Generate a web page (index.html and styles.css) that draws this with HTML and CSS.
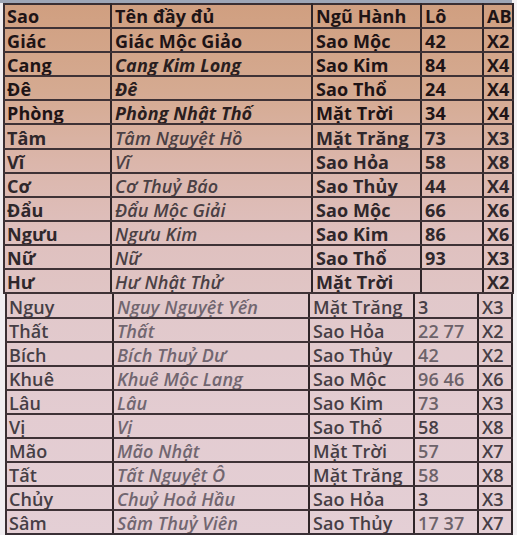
FILE: index.html
```html
<!DOCTYPE html>
<html lang="vi">
<head>
<meta charset="utf-8">
<title>Nhị thập bát tú</title>
<link rel="stylesheet" href="styles.css">
</head>
<body>
<div class="sheet">
  <div class="topband"></div>
  <table class="grid grid-top">
    <colgroup><col class="c1"><col class="c2"><col class="c3"><col class="c4"><col class="c5"></colgroup>
    <tr class="dark head"><td>Sao</td><td>Tên đầy đủ</td><td>Ngũ Hành</td><td>Lô</td><td>AB</td></tr>
    <tr class="dark"><td>Giác</td><td>Giác Mộc Giảo</td><td>Sao Mộc</td><td>42</td><td>X2</td></tr>
    <tr class="dark"><td>Cang</td><td class="it">Cang Kim Long</td><td>Sao Kim</td><td>84</td><td>X4</td></tr>
    <tr class="dark"><td>Đê</td><td class="it">Đê</td><td>Sao Thổ</td><td>24</td><td>X4</td></tr>
    <tr class="dark"><td>Phòng</td><td class="it">Phòng Nhật Thố</td><td>Mặt Trời</td><td>34</td><td>X4</td></tr>
    <tr class="mid"><td>Tâm</td><td class="it">Tâm Nguyệt Hồ</td><td>Mặt Trăng</td><td>73</td><td>X3</td></tr>
    <tr class="mid"><td>Vĩ</td><td class="it">Vĩ</td><td>Sao Hỏa</td><td>58</td><td>X8</td></tr>
    <tr class="mid"><td>Cơ</td><td class="it">Cơ Thuỷ Báo</td><td>Sao Thủy</td><td>44</td><td>X4</td></tr>
    <tr class="mid"><td>Đẩu</td><td class="it">Đẩu Mộc Giải</td><td>Sao Mộc</td><td>66</td><td>X6</td></tr>
    <tr class="mid"><td>Ngưu</td><td class="it">Ngưu Kim</td><td>Sao Kim</td><td>86</td><td>X6</td></tr>
    <tr class="mid"><td>Nữ</td><td class="it">Nữ</td><td>Sao Thổ</td><td>93</td><td>X3</td></tr>
    <tr class="mid"><td>Hư</td><td class="it">Hư Nhật Thử</td><td>Mặt Trời</td><td></td><td>X2</td></tr>
  </table>
  <table class="grid grid-bottom">
    <colgroup><col class="d1"><col class="d2"><col class="d3"><col class="d4"><col class="d5"></colgroup>
    <tr class="light"><td>Nguy</td><td class="it">Nguy Nguyệt Yến</td><td>Mặt Trăng</td><td>3</td><td>X3</td></tr>
    <tr class="light"><td>Thất</td><td class="it">Thất</td><td>Sao Hỏa</td><td class="num">22 77</td><td>X2</td></tr>
    <tr class="light"><td>Bích</td><td class="it">Bích Thuỷ Dư</td><td>Sao Thủy</td><td class="num">42</td><td>X2</td></tr>
    <tr class="light"><td>Khuê</td><td class="it">Khuê Mộc Lang</td><td>Sao Mộc</td><td class="num">96 46</td><td>X6</td></tr>
    <tr class="light"><td>Lâu</td><td class="it">Lâu</td><td>Sao Kim</td><td class="num">73</td><td>X3</td></tr>
    <tr class="light"><td>Vị</td><td class="it">Vị</td><td>Sao Thổ</td><td>58</td><td>X8</td></tr>
    <tr class="light"><td>Mão</td><td class="it">Mão Nhật</td><td>Mặt Trời</td><td class="num">57</td><td>X7</td></tr>
    <tr class="light"><td>Tất</td><td class="it">Tất Nguyệt Ô</td><td>Mặt Trăng</td><td class="num">58</td><td>X8</td></tr>
    <tr class="light"><td>Chủy</td><td class="it">Chuỷ Hoả Hầu</td><td>Sao Hỏa</td><td>3</td><td>X3</td></tr>
    <tr class="light"><td>Sâm</td><td class="it">Sâm Thuỷ Viên</td><td>Sao Thủy</td><td class="num">17 37</td><td>X7</td></tr>
  </table>
</div>
</body>
</html>
```
FILE: styles.css
```css
html, body {
  margin: 0;
  padding: 0;
}
body {
  width: 517px;
  height: 535px;
  overflow: hidden;
  background: #f1eef1;
  font-family: "Open Sans", "Liberation Sans", sans-serif;
}
.sheet {
  width: 517px;
  height: 535px;
  background:
    linear-gradient(to right, transparent 0, transparent 512px, #f3f1f3 512px);
}
.topband {
  height: 3px;
  width: 512px;
  background: #9ea6b6;
}
.grid {
  border-collapse: collapse;
  table-layout: fixed;
  font-size: 18px;
  letter-spacing: 0.1px;
}
.grid td {
  padding: 2px 0 0 3px;
  white-space: nowrap;
  overflow: hidden;
  border-bottom: 2px solid #3e3236;
  border-right: 2px solid #2f2528;
  line-height: 20px;
  vertical-align: middle;
}
.grid td:first-child {
  border-left: 2px solid #3a2f33;
  padding-left: 2px;
}
.grid-top {
  margin-left: 3px;
  width: 509px;
  background: linear-gradient(to bottom, #d09f80 0%, #d5aa91 30%, #dbb6ab 55%, #dfc0be 80%, #e0c5c5 100%);
}
.grid-top tr { height: 24.1px; }
.grid-top .c1 { width: 107px; }
.grid-top .c2 { width: 201px; }
.grid-top .c3 { width: 109px; }
.grid-top .c4 { width: 62px; }
.grid-top .c5 { width: 30px; }
.grid-top tr.head td { border-top: 2px solid #3a2f33; padding-top: 0; }
.grid-bottom {
  margin-left: 5px;
  width: 506px;
  background: linear-gradient(to bottom, #e1c8ca 0%, #e3ccd1 50%, #e4cfd5 100%);
}
.grid-bottom tr { height: 24px; }
.grid-bottom .d1 { width: 107px; }
.grid-bottom .d2 { width: 196px; }
.grid-bottom .d3 { width: 105px; }
.grid-bottom .d4 { width: 64px; }
.grid-bottom .d5 { width: 34px; }
.grid-bottom tr:last-child td { border-bottom-width: 3px; border-bottom-color: #3a3036; }

.dark td { color: #1e1416; font-weight: 700; }
.dark td.it { font-style: italic; color: #2a1e20; }
.mid td { color: #2f272b; font-weight: 700; }
.mid td.it { font-style: italic; font-weight: 600; color: #4a4044; }
.light td { color: #463e45; font-weight: 600; }
.light td.it { font-style: italic; font-weight: 600; color: #716670; }
.light td.num { color: #6c6269; }
```
